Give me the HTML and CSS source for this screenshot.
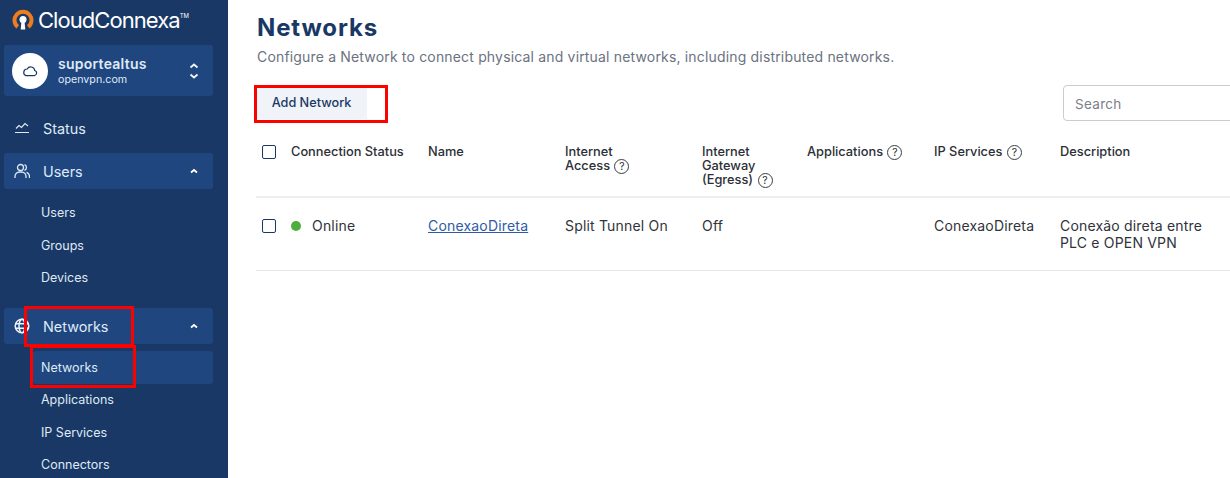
FILE: index.html
```html
<!DOCTYPE html>
<html lang="en">

<head>
    <meta charset="UTF-8">
    <meta name="viewport" content="width=device-width, initial-scale=1.0">
    <title>Networks</title>
    <link rel="stylesheet" href="styles.css">
</head>

<body>
    <aside class="sidebar">
        <div class="logo">
            <svg class="logo-icon" width="22" height="22" viewBox="0 0 22 22">
                <path d="M4.500 19.500a10.500 10.500 0 1 1 13 0l-2.500-3.200a6.500 6.500 0 1 0-8 0z" fill="#ee7d1e"/>
                <circle cx="11" cy="10.500" r="3.500" fill="#fff"/>
                <path d="M9.500 12h3l.8 8.500H8.700z" fill="#fff"/>
            </svg>
            <span class="logo-text">CloudConnexa</span><span class="logo-tm">TM</span>
        </div>

        <div class="account">
            <div class="account-avatar">
                <svg width="16" height="12" viewBox="0 0 16 12" fill="none" stroke="#1a3865" stroke-width="1.200">
                    <path d="M4 10.600h8.200a2.600 2.600 0 0 0 .5-5.100A4 4 0 0 0 5.200 4 3.400 3.400 0 0 0 4 10.600z"/>
                </svg>
            </div>
            <div class="account-text">
                <div class="account-name">suportealtus</div>
                <div class="account-domain">openvpn.com</div>
            </div>
            <svg class="account-arrows" width="10" height="16" viewBox="0 0 10 16" fill="none" stroke="#f2f5fa" stroke-width="1.800">
                <path d="M1.500 4.500 5 1.500l3.500 3M1.500 11.500 5 14.500l3.500-3"/>
            </svg>
        </div>

        <div class="nav-item nav-status">
            <svg class="nav-icon" width="16" height="12" viewBox="0 0 16 12" fill="none" stroke="#dce8f5" stroke-width="1.200">
                <path d="M2 6.500 5 3.500l2.500 2L11 1.500l3 2.500M1 10.500h14"/>
            </svg>
            <span>Status</span>
        </div>

        <div class="nav-item nav-open nav-users">
            <svg class="nav-icon" width="16" height="16" viewBox="0 0 16 16" fill="none" stroke="#dce8f5" stroke-width="1.300">
                <circle cx="6.500" cy="4.500" r="3"/>
                <path d="M1 15v-1.500A4.500 4.500 0 0 1 5.500 9h2a4.500 4.500 0 0 1 4.500 4.500V15M10.500 1.700a3 3 0 0 1 0 5.600M12.500 9.300a4.500 4.500 0 0 1 3 4.200V15"/>
            </svg>
            <span>Users</span>
            <svg class="nav-caret" width="10" height="6" viewBox="0 0 10 6" fill="none" stroke="#fff" stroke-width="1.800">
                <path d="M2 4.500 5 2l3 2.500"/>
            </svg>
        </div>
        <ul class="subnav">
            <li>Users</li>
            <li>Groups</li>
            <li>Devices</li>
        </ul>

        <div class="nav-item nav-open nav-networks">
            <svg class="nav-icon" width="16" height="16" viewBox="0 0 16 16" fill="none" stroke="#eef3f9" stroke-width="1.500">
                <circle cx="8" cy="8" r="6.800"/>
                <ellipse cx="8" cy="8" rx="3" ry="6.800"/>
                <path d="M1.500 5.800h13M1.500 10.200h13"/>
            </svg>
            <span>Networks</span>
            <svg class="nav-caret" width="10" height="6" viewBox="0 0 10 6" fill="none" stroke="#fff" stroke-width="1.800">
                <path d="M2 4.500 5 2l3 2.500"/>
            </svg>
            <div class="mark mark-nav"></div>
        </div>
        <ul class="subnav subnav-networks">
            <li class="active">Networks<div class="mark mark-sub"></div></li>
            <li>Applications</li>
            <li>IP Services</li>
            <li>Connectors</li>
        </ul>
    </aside>

    <main class="content">
        <h1>Networks</h1>
        <p class="subtitle">Configure a Network to connect physical and virtual networks, including distributed networks.</p>

        <div class="toolbar">
            <button class="add-btn">Add Network<span class="mark mark-btn"></span></button>
            <input class="search" type="text" placeholder="Search">
        </div>

        <table class="networks-table">
            <colgroup>
                <col class="col-check">
                <col class="col-status">
                <col class="col-std">
                <col class="col-std">
                <col class="col-gateway">
                <col class="col-apps">
                <col class="col-ip">
                <col class="col-desc">
            </colgroup>
            <thead>
                <tr>
                    <th><span class="checkbox"></span></th>
                    <th>Connection Status</th>
                    <th>Name</th>
                    <th>Internet<br>Access <span class="help">?</span></th>
                    <th>Internet<br>Gateway<br>(Egress) <span class="help">?</span></th>
                    <th>Applications <span class="help">?</span></th>
                    <th>IP Services <span class="help">?</span></th>
                    <th>Description</th>
                </tr>
            </thead>
            <tbody>
                <tr>
                    <td><span class="checkbox checkbox-row"></span></td>
                    <td><span class="dot"></span>Online</td>
                    <td><a href="#">ConexaoDireta</a></td>
                    <td>Split Tunnel On</td>
                    <td>Off</td>
                    <td></td>
                    <td>ConexaoDireta</td>
                    <td>Conexão direta entre<br>PLC e OPEN VPN</td>
                </tr>
            </tbody>
        </table>
    </main>
</body>

</html>
```
FILE: styles.css
```css
html,
body {
    height: 100%;
}

body {
    font-family: 'Inter', 'Liberation Sans', sans-serif;
    margin: 0;
    padding: 0;
    display: flex;
    background-color: #fff;
    overflow: hidden;
}

.sidebar {
    width: 228px;
    flex-shrink: 0;
    height: 478px;
    overflow: hidden;
    background-color: #1a3865;
    color: #dfeaf6;
}

.logo {
    display: flex;
    align-items: flex-start;
    height: 45px;
    padding: 9px 0 0 12px;
    box-sizing: border-box;
    color: #fff;
}

.logo-text {
    font-size: 22px;
    line-height: 22px;
    margin-left: 4px;
    letter-spacing: -0.95px;
}

.logo-tm {
    font-size: 6px;
    line-height: 8px;
    margin-top: 3px;
}

.account {
    display: flex;
    align-items: center;
    height: 51px;
    margin: 0 15px 0 4px;
    padding: 0 14px 0 8px;
    background-color: #204680;
    border-radius: 3px;
}

.account-avatar {
    width: 36px;
    height: 36px;
    border-radius: 50%;
    background-color: #fff;
    display: flex;
    align-items: center;
    justify-content: center;
}

.account-text {
    flex: 1;
    margin-left: 10px;
}

.account-name {
    font-size: 14px;
    line-height: 18px;
    font-weight: 600;
    letter-spacing: 0.25px;
}

.account-domain {
    font-size: 10.700px;
    line-height: 14px;
}

.nav-item {
    position: relative;
    display: flex;
    align-items: center;
    height: 36px;
    margin: 0 15px 0 4px;
    padding: 0 14px 0 10px;
    font-size: 14.400px;
    border-radius: 3px;
}

.nav-item span {
    flex: 1;
    margin-left: 13px;
}

.nav-icon {
    width: 16px;
}

.nav-status {
    margin-top: 14px;
}

.nav-users {
    margin-top: 7px;
}

.nav-open {
    background-color: #204680;
}

.nav-networks {
    margin-top: 13.400px;
}

.subnav {
    list-style: none;
    margin: 8px 15px 0 4px;
    padding: 0;
    font-size: 12.500px;
}

.subnav li {
    position: relative;
    height: 32.600px;
    line-height: 32.600px;
    padding-left: 37px;
    border-radius: 3px;
}

.subnav-networks {
    margin-top: 7px;
}

.subnav li.active {
    height: 33px;
    line-height: 33px;
    margin-left: 29px;
    padding-left: 8px;
    background-color: #204680;
}

.mark {
    position: absolute;
    border: 3px solid #fe0000;
    box-sizing: border-box;
    pointer-events: none;
}

.mark-nav {
    left: 20px;
    top: -2px;
    width: 110px;
    height: 41px;
}

.mark-sub {
    left: -3px;
    top: -6px;
    width: 106px;
    height: 43px;
}

.mark-btn {
    left: -2px;
    top: 0;
    width: 134px;
    height: 38px;
}

.content {
    flex: 1;
    min-width: 0;
    padding: 0 0 0 28px;
}

h1 {
    margin: 14px 0 0 1px;
    font-size: 24px;
    line-height: 28px;
    font-weight: 700;
    letter-spacing: 0.85px;
    color: #1a3865;
}

.subtitle {
    margin: 6px 0 0 1px;
    font-size: 14px;
    line-height: 18px;
    letter-spacing: 0.17px;
    color: #6b7280;
}

.toolbar {
    display: flex;
    justify-content: space-between;
    align-items: flex-start;
    margin-top: 19px;
    height: 36px;
}

.add-btn {
    position: relative;
    width: 111px;
    height: 34px;
    border: none;
    padding: 0;
    background-color: #f0f3f8;
    color: #1a3865;
    font-family: inherit;
    font-size: 12.700px;
    font-weight: 500;
    cursor: pointer;
}

.search {
    width: 190px;
    height: 36px;
    flex-shrink: 0;
    margin-right: -23px;
    box-sizing: border-box;
    padding: 2px 11px 0;
    border: 1px solid #c9ccd1;
    border-radius: 4px;
    font-family: inherit;
    font-size: 13.500px;
    letter-spacing: 0.3px;
}

.search::placeholder {
    color: #7b8088;
}

.networks-table {
    width: 1002px;
    table-layout: fixed;
    border-collapse: collapse;
    margin-top: 18px;
    color: #2c2f36;
}

.col-check {
    width: 35px;
}

.col-status,
.col-std {
    width: 137px;
}

.col-gateway {
    width: 105px;
}

.col-apps {
    width: 127px;
}

.col-ip {
    width: 126px;
}

.col-desc {
    width: 198px;
}

th,
td {
    text-align: left;
    vertical-align: top;
    padding: 0;
}

th {
    height: 58px;
    padding-top: 6px;
    box-sizing: border-box;
    font-size: 12.800px;
    line-height: 14px;
    font-weight: 500;
    border-bottom: 2px solid #eeeeee;
}

td {
    height: 73px;
    padding-top: 19px;
    box-sizing: border-box;
    font-size: 14px;
    line-height: 17px;
    letter-spacing: 0.18px;
    border-bottom: 1px solid #e8e8e8;
    color: #30333a;
}

th:first-child,
td:first-child {
    padding-left: 6px;
}

.checkbox {
    display: block;
    width: 14px;
    height: 14px;
    border: 1.500px solid #1a3865;
    border-radius: 2px;
    box-sizing: border-box;
}

.checkbox-row {
    margin-top: 2px;
}

.dot {
    display: inline-block;
    width: 10px;
    height: 10px;
    margin-right: 11px;
    border-radius: 50%;
    background-color: #4cae3c;
}

.help {
    display: inline-block;
    width: 15px;
    height: 15px;
    margin-left: 1px;
    border: 1px solid #3a3d44;
    border-radius: 50%;
    box-sizing: border-box;
    font-size: 10.500px;
    line-height: 13px;
    font-weight: 400;
    text-align: center;
    vertical-align: 0;
}

a {
    color: #2f5ba8;
}
```
